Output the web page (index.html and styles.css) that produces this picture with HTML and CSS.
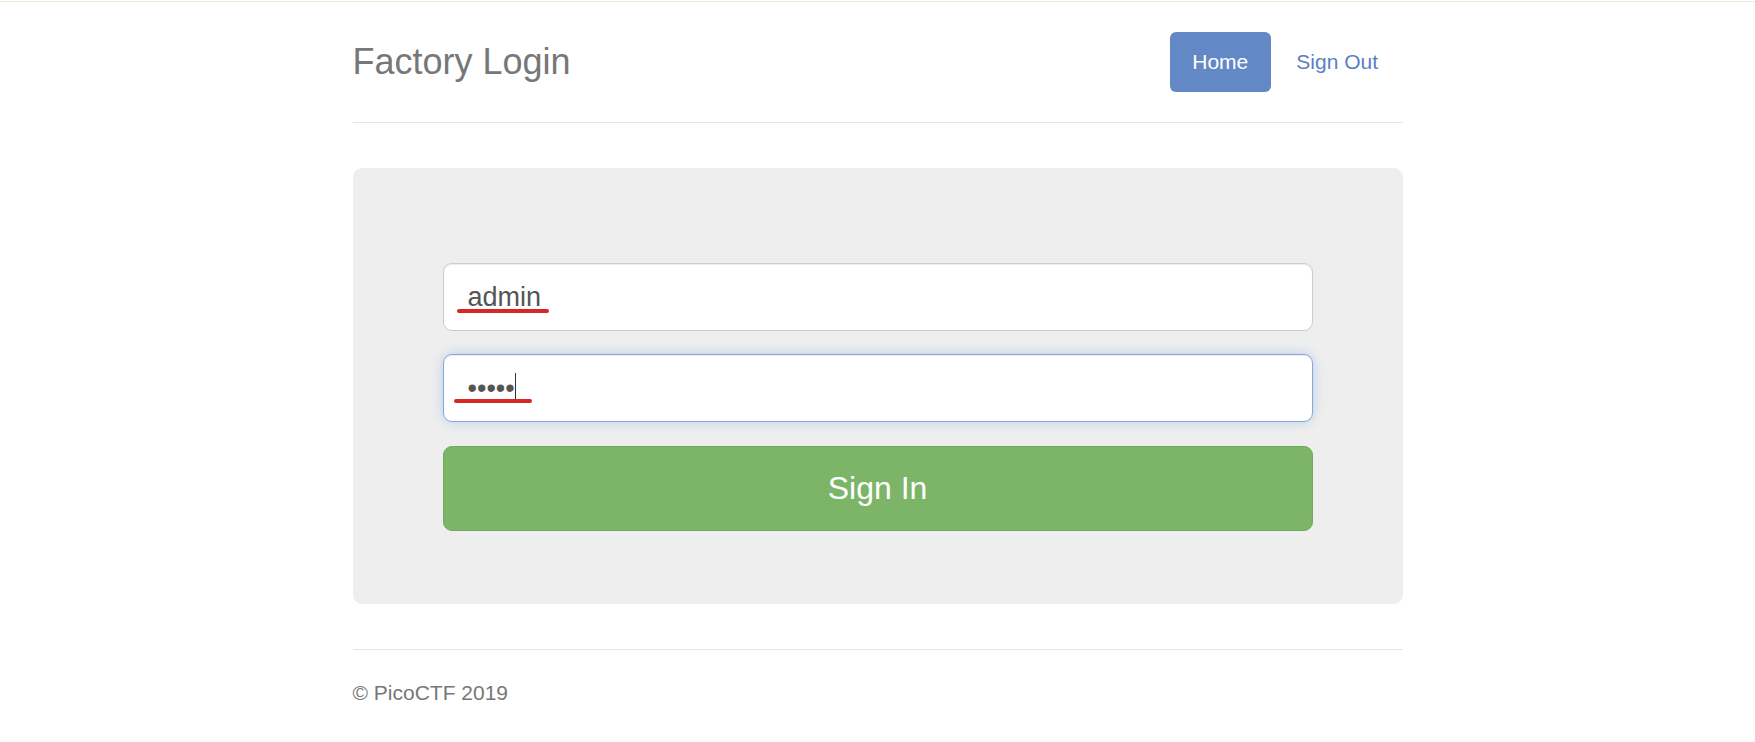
FILE: index.html
```html
<!DOCTYPE html>
<html lang="en">
<head>
<meta charset="utf-8">
<title>Factory Login</title>
<link rel="stylesheet" href="styles.css">
</head>
<body>
<div class="topline"></div>
<div class="container">
  <div class="header">
    <h3 class="brand">Factory Login</h3>
    <ul class="nav">
      <li><a class="pill active" href="#">Home</a></li>
      <li><a class="pill" href="#">Sign Out</a></li>
    </ul>
  </div>
  <div class="jumbotron">
    <form class="login">
      <div class="field">
        <input class="input" type="text" value="admin">
        <span class="mark mark-user"></span>
      </div>
      <div class="field">
        <input class="input focused" type="password" value="admin">
        <span class="caret"></span>
        <span class="mark mark-pass"></span>
      </div>
      <button class="btn-signin" type="button">Sign In</button>
    </form>
  </div>
  <footer class="footer">
    <p>© PicoCTF 2019</p>
  </footer>
</div>
</body>
</html>
```

FILE: styles.css
```css
* { box-sizing: border-box; }
html, body { margin: 0; padding: 0; background: #fff; }
body {
  font-family: "Liberation Sans", Arial, sans-serif;
  font-size: 21px;
  line-height: 1.42857;
  color: #333;
}
.topline {
  margin-top: 1px;
  height: 1px;
  background: #ecedd9;
}
.container {
  width: 1050px;
  margin: 0 auto;
  padding-top: 30px;
}
.header {
  display: flex;
  justify-content: space-between;
  align-items: center;
  padding-bottom: 30px;
  border-bottom: 1px solid #e5e5e5;
  margin-bottom: 45px;
}
.brand {
  margin: 0;
  font-size: 36px;
  font-weight: 400;
  line-height: 60px;
  color: #777;
}
.nav {
  display: flex;
  list-style: none;
  margin: 0 2px 0 0;
  padding: 0;
}
.nav li + li { margin-left: 3px; }
.pill {
  display: block;
  padding: 15px 22.5px;
  line-height: 30px;
  font-size: 21px;
  color: #5d7fbf;
  text-decoration: none;
  border-radius: 6px;
}
.pill.active {
  background: #6289c6;
  color: #fff;
}
.jumbotron {
  background: #eee;
  border-radius: 9px;
  padding: 95px 90px 73px;
  margin-bottom: 45px;
}
.login { margin: 0; }
.field {
  position: relative;
  margin-bottom: 23px;
}
.field + .field { margin-bottom: 24px; }
.input {
  display: block;
  width: 100%;
  height: 68px;
  padding: 15px 24px;
  font-family: "Liberation Sans", Arial, sans-serif;
  font-size: 27px;
  line-height: 36px;
  color: #555;
  background: #fff;
  border: 1px solid #ccc;
  border-radius: 9px;
  box-shadow: inset 0 1px 1px rgba(0,0,0,.075);
  outline: none;
}
.input.focused {
  border-color: #86a9dc;
  box-shadow: inset 0 1px 1px rgba(0,0,0,.075), 0 0 12px rgba(102,150,225,.35);
}
.mark {
  position: absolute;
  height: 4px;
  border-radius: 2px;
  background: #d62626;
}
.mark-user { left: 14px; top: 46px; width: 92px; }
.mark-pass { left: 11px; top: 45px; width: 78px; }
.caret {
  position: absolute;
  left: 72px;
  top: 19px;
  width: 1px;
  height: 28px;
  background: #333;
}
.btn-signin {
  display: block;
  width: 100%;
  height: 85px;
  font-family: "Liberation Sans", Arial, sans-serif;
  font-size: 32px;
  color: #fff;
  background: #7cb567;
  border: 1px solid #70a95c;
  border-radius: 9px;
  cursor: pointer;
}
.footer {
  border-top: 1px solid #e5e5e5;
  padding-top: 28px;
  color: #777;
}
.footer p {
  margin: 0 0 15px;
  font-size: 21px;
  line-height: 30px;
}
```
